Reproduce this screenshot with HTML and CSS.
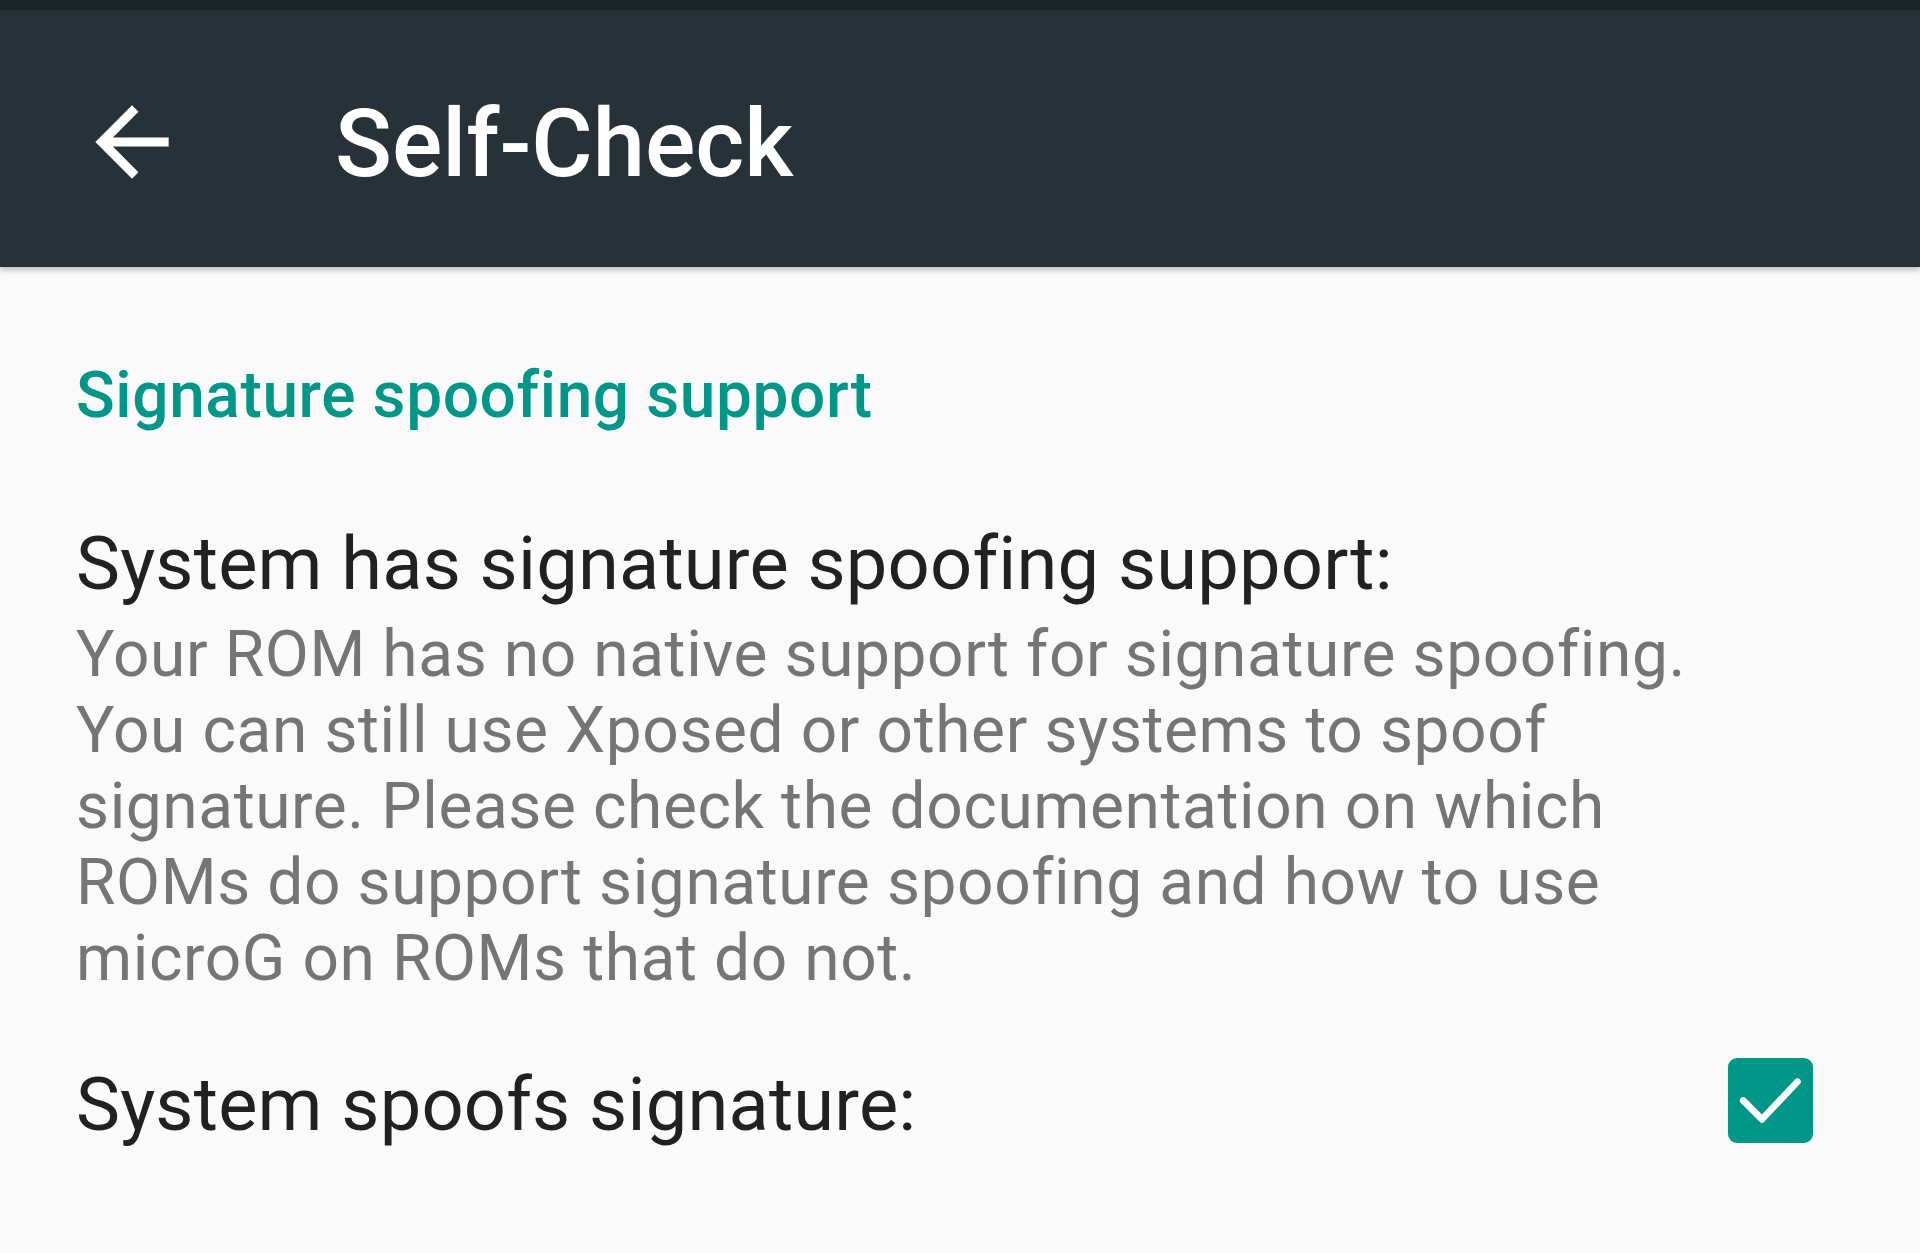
FILE: index.html
```html
<!DOCTYPE html>
<html lang="en">
<head>
  <meta charset="UTF-8" />
  <title>Self-Check</title>
  <link rel="stylesheet" href="styles.css">
</head>
<body>
  <div class="statusbar"></div>
  <div class="toolbar">
    <svg class="back" viewBox="0 0 24 24"><path d="M20 11H7.83l5.59-5.59L12 4l-8 8 8 8 1.41-1.41L7.83 13H20v-2z" fill="#fff"/></svg>
    <div class="title">Self-Check</div>
  </div>

  <div class="content">
    <div class="category">Signature spoofing support</div>

    <div class="pref">
      <div class="pref-title">System has signature spoofing support:</div>
      <div class="pref-summary">Your ROM has no native support for signature spoofing. You can still use Xposed or other systems to spoof signature. Please check the documentation on which ROMs do support signature spoofing and how to use microG on ROMs that do not.</div>
    </div>

    <div class="pref pref-row">
      <div class="pref-title">System spoofs signature:</div>
      <div class="checkbox">
        <svg viewBox="0 0 24 24"><path d="M4.3 12l5.3 5.3 10-10.6" fill="none" stroke="#fff" stroke-width="1.9" stroke-linecap="round" stroke-linejoin="round"/></svg>
      </div>
    </div>
  </div>
</body>
</html>
```

FILE: styles.css
```css
body {
  margin: 0;
  background-color: #fafafa;
  font-family: Roboto, "Noto Sans", sans-serif;
}
.statusbar {
  height: 10px;
  background-color: #1e2427;
}
.toolbar {
  height: 257px;
  background-color: #263238;
  display: flex;
  align-items: center;
  box-shadow: 0 3px 6px rgba(0, 0, 0, 0.25);
  position: relative;
}
.back {
  width: 110px;
  height: 110px;
  margin-left: 77px;
  margin-top: 6px;
}
.title {
  margin-left: 148px;
  margin-top: 10px;
  color: #fff;
  font-size: 94px;
  font-weight: 500;
}
.content {
  padding: 91px 107px 0 76px;
}
.category {
  color: #009688;
  font-size: 64px;
  font-weight: 500;
  line-height: 76px;
  letter-spacing: 0.6px;
}
.pref {
  margin-top: 86px;
}
.pref-title {
  color: #212121;
  font-size: 74px;
  line-height: 88px;
  letter-spacing: 0.2px;
}
.pref-summary {
  margin-top: 9px;
  color: #757575;
  font-size: 64px;
  line-height: 76px;
  letter-spacing: 0.6px;
  max-width: 1660px;
}
.pref-row {
  margin-top: 61px;
  display: flex;
  align-items: center;
  justify-content: space-between;
}
.checkbox {
  width: 85px;
  height: 85px;
  margin-bottom: 8px;
  border-radius: 9px;
  background-color: #009688;
  display: flex;
  align-items: center;
  justify-content: center;
}
.checkbox svg {
  width: 85px;
  height: 85px;
}
```
